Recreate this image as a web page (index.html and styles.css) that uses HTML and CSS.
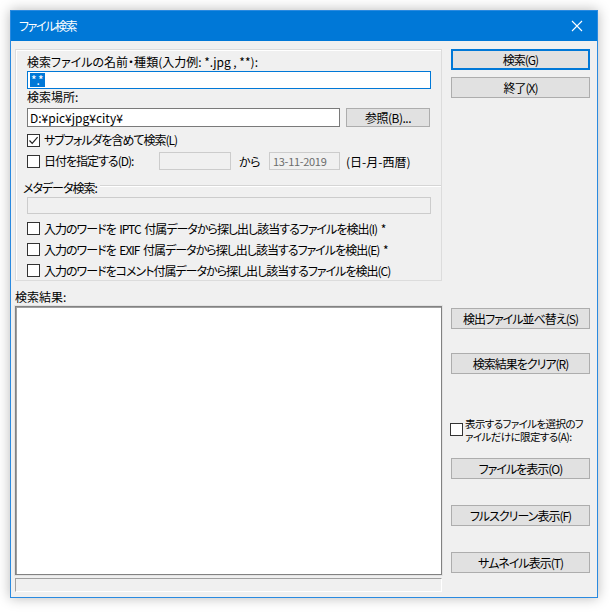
FILE: index.html
```html
<!DOCTYPE html>
<html lang="ja">
<head>
<meta charset="utf-8">
<title>ファイル検索</title>
<link rel="stylesheet" href="styles.css">
</head>
<body>
<div class="window">
  <div class="titlebar">
    <span class="title">ファイル検索</span>
    <svg class="close" width="12" height="12" viewBox="0 0 12 12"><path d="M1 1 L11 11 M11 1 L1 11" stroke="#fff" stroke-width="1.1" fill="none"/></svg>
  </div>
  <div class="content">
    <div class="left">
      <div class="panel">
        <div class="lbl">検索ファイルの名前・種類(入力例: *.jpg , **):</div>
        <div class="input focus"><span class="sel">*.*</span></div>
        <div class="lbl">検索場所:</div>
        <div class="row path-row">
          <div class="input path">D:¥pic¥jpg¥city¥</div>
          <button class="btn browse">参照(B)...</button>
        </div>
        <div class="check sub"><span class="box"><svg width="11" height="11" viewBox="0 0 11 11"><path d="M1.5 5.5 L4.2 8.3 L9.6 2.2" stroke="#222" stroke-width="1.2" fill="none"/></svg></span>サブフォルダを含めて検索(L)</div>
        <div class="row date-row">
          <div class="check date-check"><span class="box"></span>日付を指定する(D):</div>
          <div class="input disabled date-from"></div>
          <span class="kara">から</span>
          <div class="input disabled date-to">13-11-2019</div>
          <span class="fmt">(日-月-西暦)</span>
        </div>
        <div class="meta-title"><span>メタデータ検索:</span><span class="rule"></span></div>
        <div class="input disabled meta"></div>
        <div class="check opt"><span class="box"></span>入力のワードを IPTC 付属データから探し出し該当するファイルを検出(I) *</div>
        <div class="check opt"><span class="box"></span>入力のワードを EXIF 付属データから探し出し該当するファイルを検出(E) *</div>
        <div class="check opt"><span class="box"></span>入力のワードをコメント付属データから探し出し該当するファイルを検出(C)</div>
      </div>
      <div class="lbl results-lbl">検索結果:</div>
      <div class="list"></div>
      <div class="status"></div>
    </div>
    <div class="right">
      <button class="btn default b-search">検索(G)</button>
      <button class="btn b-exit">終了(X)</button>
      <button class="btn b-sort">検出ファイル並べ替え(S)</button>
      <button class="btn b-clear">検索結果をクリア(R)</button>
      <div class="check limit"><span class="box"></span><div class="limit-text"><div class="ln">表示するファイルを選択のフ</div><div class="ln">ァイルだけに限定する(A):</div></div></div>
      <button class="btn b-show">ファイルを表示(O)</button>
      <button class="btn b-full">フルスクリーン表示(F)</button>
      <button class="btn b-thumb">サムネイル表示(T)</button>
    </div>
  </div>
</div>
</body>
</html>
```

FILE: styles.css
```css
* { box-sizing: border-box; }
html, body { margin: 0; padding: 0; background: #ffffff; }
body {
  width: 610px;
  height: 612px;
  padding: 10px;
  font-family: "Noto Sans CJK JP", "Noto Sans", sans-serif;
  font-size: 12px;
  font-feature-settings: "palt" 1;
  color: #000;
}
.window {
  width: 588px;
  height: 588px;
  border: 1px solid #2a8ae0;
  background: #f0f0f0;
  box-shadow: 0 0 12px rgba(0,0,0,0.28);
  display: flex;
  flex-direction: column;
}
.titlebar {
  height: 30px;
  background: #0078d7;
  display: flex;
  align-items: center;
  justify-content: space-between;
  padding: 0 14px 0 8px;
  flex: none;
}
.title { color: #fff; font-size: 12px; line-height: 16px; letter-spacing: -1.4px; }
.close { display: block; }
.content {
  flex: 1;
  display: flex;
  padding: 8px 6px 6px 4px;
  gap: 9px;
}
.left { width: 427px; display: flex; flex-direction: column; }
.right { width: 139px; display: flex; flex-direction: column; }

.panel {
  border: 1px solid #dcdcdc;
  box-shadow: inset 1px 1px 0 #fff;
  padding: 4px 10px 0 11px;
  height: 232px;
}
.lbl { line-height: 16px; height: 16px; white-space: nowrap; }
.input {
  background: #fff;
  border: 1px solid #7a7a7a;
  height: 18px;
  line-height: 16px;
  padding: 0 2px;
  font-size: 12px;
  white-space: nowrap;
  overflow: hidden;
}
.input.focus { border-color: #0078d7; margin-top: 1px; margin-bottom: 0; }
.sel { background: #0078d7; color: #fff; padding: 0 1px; display: inline-block; line-height: 14px; margin-top: 1px; }
.row { display: flex; align-items: center; }
.path-row { margin-top: 3px; gap: 6px; }
.input.path { width: 313px; height: 19px; line-height: 17px; }
.btn {
  font-family: inherit;
  font-size: 12px;
  font-feature-settings: "palt" 1;
  letter-spacing: -1px;
  background: #e1e1e1;
  border: 1px solid #adadad;
  color: #000;
  padding: 0;
  margin: 0;
  height: 21px;
  line-height: 18px;
  text-align: center;
  display: block;
  width: 100%;
}
.btn.browse { width: 84px; height: 19px; line-height: 16px; letter-spacing: -0.5px; }
.btn.default { border: 2px solid #0078d7; line-height: 16px; }

.check {
  display: flex;
  align-items: center;
  height: 16px;
  line-height: 16px;
  white-space: pre;
  letter-spacing: -1px;
  word-spacing: 2px;
}
.box {
  width: 13px; height: 13px;
  border: 1px solid #333;
  background: #fff;
  margin-right: 4px;
  flex: none;
  display: flex; align-items: center; justify-content: center;
}
.box svg { display: block; }
.check.sub { margin-top: 5px; }
.date-row { margin-top: 4px; height: 18px; }
.date-check { width: 132px; }
.input.disabled { background: #f0f0f0; border-color: #cccccc; color: #6d6d6d; }
.date-from { width: 72px; }
.kara { margin-left: 8px; width: 30px; letter-spacing: -0.5px; }
.date-to { width: 71px; font-size: 11px; padding-left: 3px; letter-spacing: -0.3px; }
.fmt { margin-left: 6px; }
.meta-title {
  margin: 10px -10px 0 -4px;
  display: flex;
  align-items: center;
  height: 16px;
  line-height: 16px;
  letter-spacing: -1px;
}
.meta-title .rule {
  flex: 1;
  height: 2px;
  border-top: 1px solid #d5d5d5;
  border-bottom: 1px solid #fff;
  margin-left: 3px;
  margin-top: -5px;
}
.input.meta { margin-top: 1px; height: 17px; }
.check.opt { height: 21px; }
.meta + .opt { margin-top: 4px; }

.results-lbl { margin-top: 8px; }
.list {
  margin-top: 1px;
  height: 269px;
  background: #fff;
  border: 1px solid #828282;
  box-shadow: inset 1px 1px 0 #a0a0a0;
  outline: 1px solid #e3e3e3;
}
.status {
  margin-top: 3px;
  height: 14px;
  border-top: 1px solid #a0a0a0;
  border-left: 1px solid #a0a0a0;
  border-right: 1px solid #fff;
  border-bottom: 1px solid #fff;
}

.b-exit { margin-top: 7px; }
.b-sort { margin-top: 210px; }
.b-clear { margin-top: 24px; }
.check.limit {
  margin-top: 43px;
  height: 26px;
  align-items: flex-start;
  margin-left: -1px;
  letter-spacing: -0.6px;
  word-spacing: 0;
}
.check.limit .box { margin-top: 6px; margin-right: 2px; }
.limit-text { font-size: 10.5px; }
.limit-text .ln { height: 13px; line-height: 13px; }
.b-show { margin-top: 15px; }
.b-full { margin-top: 26px; }
.b-thumb { margin-top: 26px; }
```
